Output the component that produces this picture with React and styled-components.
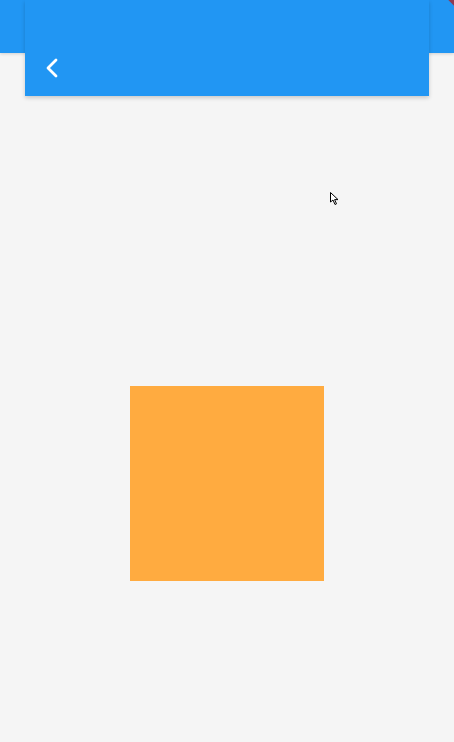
import React from 'react'
import styled, { createGlobalStyle } from 'styled-components'

const GlobalStyle = createGlobalStyle`
    html, body {
        margin:0;
        padding:0;
        background:#f5f5f5;
        font-family:Roboto, "Liberation Sans", sans-serif;
    }
`

const App = () => {
    return (
        <Page>
            <GlobalStyle />
            <BackBar />
            <Banner />
            <Panel>
                <BackButton aria-label='back'>
                    <svg width='14' height='20' viewBox='0 0 14 20'>
                        <path d='M11 2 L3 10 L11 18' fill='none' stroke='#fff' strokeWidth='2.8' strokeLinecap='round' strokeLinejoin='round' />
                    </svg>
                </BackButton>
            </Panel>
            <Cursor>
                <svg width='9' height='14' viewBox='0 0 9 14'>
                    <path d='M0.5 0.5 L0.5 10 L3 8 L5 12.5 L6.5 11.8 L4.6 7.6 L8 7.6 Z' fill='#fff' stroke='#000' strokeWidth='1' />
                </svg>
            </Cursor>
            <Box />
        </Page>
    )
}

export default App

const Page = styled.div`
    position:relative;
    min-height:742px;
    display:flex;
    flex-direction:column;
    align-items:center;
    overflow:hidden;
`

const BackBar = styled.div`
    position:absolute;
    top:0;
    left:0;
    right:0;
    height:53px;
    background:#2196F3;
    box-shadow:0 1px 3px rgba(0,0,0,0.15);
`

const Banner = styled.div`
    position:absolute;
    top:-4px;
    right:-4px;
    width:8px;
    height:8px;
    background:#8e3a52;
    transform:rotate(45deg);
`

const Panel = styled.div`
    position:relative;
    z-index:1;
    align-self:stretch;
    margin:0 25px;
    height:96px;
    background:#2196F3;
    box-shadow:0 2px 4px rgba(0,0,0,0.18);
    display:flex;
    align-items:flex-end;
    padding:0 0 18px 20px;
    box-sizing:border-box;
`

const BackButton = styled.div`
    width:14px;
    height:20px;
    display:flex;
`

const Cursor = styled.div`
    position:absolute;
    top:191px;
    left:330px;
    width:9px;
    height:14px;
`

const Box = styled.div`
    margin-top:290px;
    width:194px;
    height:195px;
    background:#FFAB40;
`
